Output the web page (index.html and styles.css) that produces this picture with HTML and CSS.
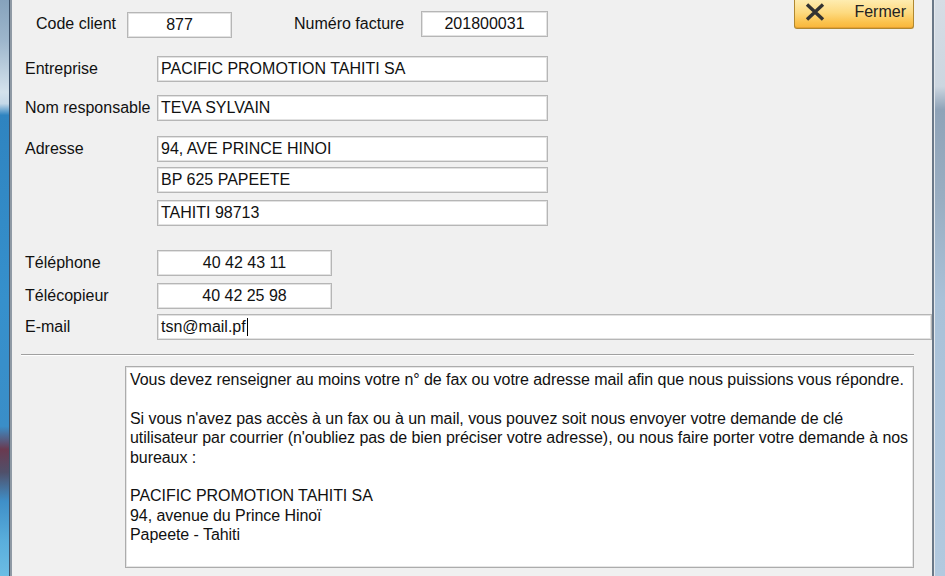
FILE: index.html
```html
<!DOCTYPE html>
<html lang="fr">
<head>
  <meta charset="UTF-8" />
  <title>Fiche client</title>
  <link rel="stylesheet" href="styles.css">
</head>
<body>
  <div class="window">
    <div class="frame-left"><div class="glass glass-left"></div></div>

    <div class="client">
      <!-- en-tete : identifiants + bouton fermer -->
      <div class="head">
        <div class="ids">
          <span class="lbl lbl-code">Code client</span>
          <div class="box box-code center">877</div>
          <span class="lbl lbl-num">Numéro facture</span>
          <div class="box box-num center">201800031</div>
        </div>
        <button class="btn-close">
          <svg width="20" height="18" viewBox="0 0 20 18">
            <path d="M2 1.5 L18 16.5 M18 1.5 L2 16.5" stroke="#333" stroke-width="3.4" fill="none" />
          </svg>
          <span>Fermer</span>
        </button>
      </div>

      <div class="row row-ent">
        <span class="lbl">Entreprise</span>
        <div class="box box-wide">PACIFIC PROMOTION TAHITI SA</div>
      </div>

      <div class="row row-nom">
        <span class="lbl">Nom responsable</span>
        <div class="box box-wide">TEVA SYLVAIN</div>
      </div>

      <div class="row row-adr1">
        <span class="lbl">Adresse</span>
        <div class="box box-wide">94, AVE PRINCE HINOI</div>
      </div>
      <div class="row row-adr2">
        <span class="lbl"></span>
        <div class="box box-wide">BP 625 PAPEETE</div>
      </div>
      <div class="row row-adr3">
        <span class="lbl"></span>
        <div class="box box-wide">TAHITI 98713</div>
      </div>

      <div class="row row-tel">
        <span class="lbl">Téléphone</span>
        <div class="box box-phone center">40 42 43 11</div>
      </div>
      <div class="row row-fax">
        <span class="lbl">Télécopieur</span>
        <div class="box box-phone center">40 42 25 98</div>
      </div>
      <div class="row row-mail">
        <span class="lbl">E-mail</span>
        <div class="box box-mail">tsn@mail.pf<span class="caret"></span></div>
      </div>

      <div class="separator"></div>

      <div class="memo">
        Vous devez renseigner au moins votre n° de fax ou votre adresse mail afin que nous puissions vous répondre.<br>
        <br>
        Si vous n'avez pas accès à un fax ou à un mail, vous pouvez soit nous envoyer votre demande de clé<br>
        utilisateur par courrier (n'oubliez pas de bien préciser votre adresse), ou nous faire porter votre demande à nos<br>
        bureaux :<br>
        <br>
        PACIFIC PROMOTION TAHITI SA<br>
        94, avenue du Prince Hinoï<br>
        Papeete - Tahiti
      </div>
    </div>

    <div class="frame-right"><div class="glass glass-right"></div></div>
  </div>
</body>
</html>
```

FILE: styles.css
```css
* {
  margin: 0;
  padding: 0;
  box-sizing: border-box;
}

html, body {
  height: 100%;
}

body {
  background: #f0f0f0;
  font-family: "Liberation Sans", Arial, sans-serif;
  font-size: 16px;
  color: #111;
  overflow: hidden;
}

.window {
  display: flex;
  height: 576px;
}

/* === cadre fenetre (verre) === */
.frame-left {
  flex: none;
  display: flex;
  width: 12px;
  background: #8f9aa5;
}

.frame-right {
  flex: none;
  display: flex;
  width: 13px;
  background: #6a7888;
}

.glass {
  height: 100%;
}

.glass-left {
  width: 9px;
  border-right: 1px solid #3d5168;
  box-sizing: content-box;
  margin-right: 1px;
  background: linear-gradient(to bottom,
    #86a2bc, #9db6cc 7%, #d4e2ec 16%, #c4d8e8 18%,
    #2f84c0 20%, #3690cc 52%, #3a8ec8 74%,
    #6a3a50 78%, #50506a 82%, #3f8fc8 87%,
    #5aaedc 94%, #6cbde4);
}

.glass-right {
  width: 10px;
  margin-left: 2px;
  border-left: 1px solid #e4e8ec;
  box-sizing: content-box;
  background: linear-gradient(to bottom,
    #d6dde5, #ccd6e0 15%, #8fa3b8 19%, #9aaec2 35%,
    #a9c1d8 52%, #b2c9df);
}

.client {
  flex: 1;
  min-width: 0;
  overflow: hidden;
  padding-left: 13px;
}

/* === en-tete === */
.head {
  display: flex;
  align-items: flex-start;
}

.ids {
  display: flex;
  align-items: center;
  margin-top: 10px;
}

.lbl {
  flex: none;
  width: 132px;
  white-space: nowrap;
}

.lbl-code {
  width: 91px;
  margin-left: 11px;
}

.lbl-num {
  width: 127px;
  margin-left: 62px;
}

.btn-close {
  flex: none;
  display: flex;
  align-items: center;
  justify-content: space-between;
  width: 120px;
  height: 29px;
  margin-left: auto;
  margin-right: 18px;
  padding: 0 7px 4px 10px;
  border: 1px solid #b08830;
  border-top: none;
  border-radius: 0 0 3px 3px;
  background: linear-gradient(to bottom, #feecb0 0px, #fdda80 45%, #fbc24c 80%, #f8b53a 100%);
  box-shadow: inset 0 -1px #e6a032;
  font-family: "Liberation Sans", Arial, sans-serif;
  font-size: 16px;
  color: #222;
  cursor: pointer;
}

/* === champs === */
.box {
  height: 26px;
  line-height: 24px;
  padding: 0 3px;
  background: #fff;
  border: 1px solid #b6b6b6;
  box-shadow: inset 0 0 0 1px #e2e2e2;
  white-space: nowrap;
}

.center {
  text-align: center;
}

.box-code {
  width: 105px;
  margin-top: 2px;
}

.box-num {
  width: 127px;
}

.box-wide {
  width: 391px;
}

.box-phone {
  width: 175px;
}

.box-mail {
  width: 800px;
}

.caret {
  display: inline-block;
  width: 1px;
  height: 18px;
  margin-left: 1px;
  vertical-align: -4px;
  background: #000;
}

.row {
  display: flex;
  align-items: center;
}

.row-ent  { margin-top: 18px; }
.row-nom  { margin-top: 13px; }
.row-adr1 { margin-top: 15px; }
.row-adr2 { margin-top: 5px; }
.row-adr3 { margin-top: 7px; }
.row-tel  { margin-top: 24px; }
.row-fax  { margin-top: 7px; }
.row-mail { margin-top: 5px; }

.separator {
  height: 2px;
  margin: 14px 18px 0 -4px;
  border-top: 1px solid #a0a0a0;
  border-bottom: 1px solid #fff;
}

/* === texte d'information === */
.memo {
  height: 202px;
  margin: 10px 18px 0 100px;
  padding: 3px 4px;
  background: #fff;
  border: 1px solid #acacac;
  box-shadow: inset 0 0 0 1px #e6e6e6;
  line-height: 19.4px;
  letter-spacing: -0.06px;
  white-space: nowrap;
}
```
